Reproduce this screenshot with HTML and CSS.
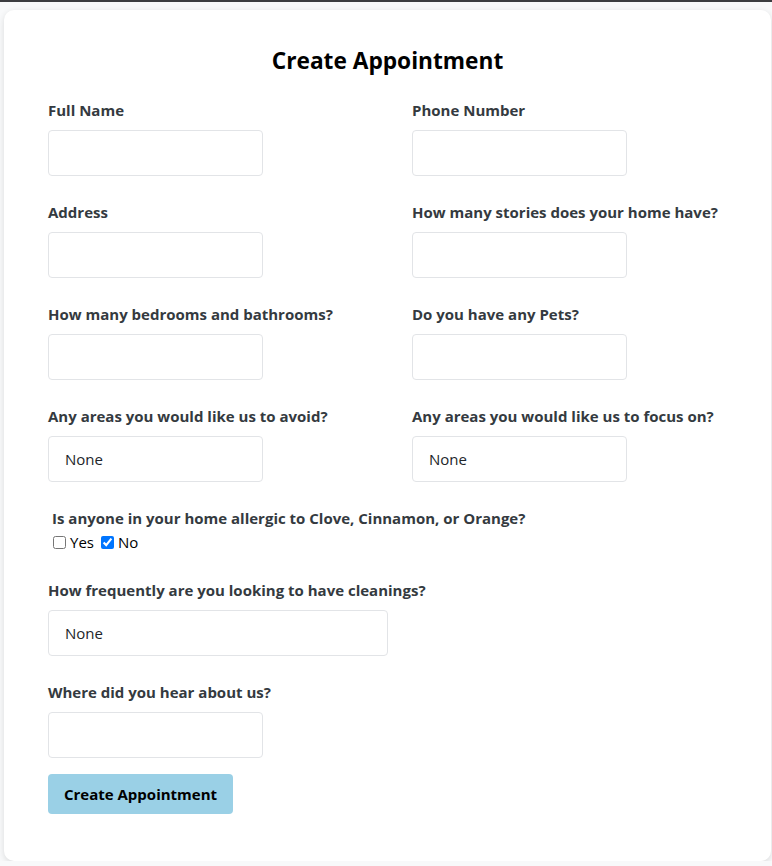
FILE: index.html
```html
<!DOCTYPE html>
<html>
<head>
<meta charset="utf-8">
<link rel="stylesheet" href="styles.css">
</head>
<body>
<div class="page">
  <div class="card">
    <h1 class="title">Create Appointment</h1>
    <form class="form">
      <div class="grid">
        <div class="field">
          <label class="label">Full Name</label>
          <input class="input" type="text">
        </div>
        <div class="field">
          <label class="label">Phone Number</label>
          <input class="input" type="text">
        </div>
        <div class="field">
          <label class="label">Address</label>
          <input class="input" type="text">
        </div>
        <div class="field">
          <label class="label">How many stories does your home have?</label>
          <input class="input" type="text">
        </div>
        <div class="field">
          <label class="label">How many bedrooms and bathrooms?</label>
          <input class="input" type="text">
        </div>
        <div class="field">
          <label class="label">Do you have any Pets?</label>
          <input class="input" type="text">
        </div>
        <div class="field">
          <label class="label">Any areas you would like us to avoid?</label>
          <input class="input" type="text" value="None">
        </div>
        <div class="field">
          <label class="label">Any areas you would like us to focus on?</label>
          <input class="input" type="text" value="None">
        </div>
      </div>
      <div class="allergy">
        <div class="label allergy-label">Is anyone in your home allergic to Clove, Cinnamon, or Orange?</div>
        <div class="checks">
          <label class="check"><input type="checkbox" class="box">Yes</label>
          <label class="check"><input type="checkbox" class="box" checked>No</label>
        </div>
      </div>
      <div class="field">
        <label class="label">How frequently are you looking to have cleanings?</label>
        <input class="input input-wide" type="text" value="None">
      </div>
      <div class="field">
        <label class="label">Where did you hear about us?</label>
        <input class="input" type="text">
      </div>
      <button type="button" class="btn">Create Appointment</button>
    </form>
  </div>
</div>
</body>
</html>
```
FILE: styles.css
```css
html, body {
  margin: 0;
  padding: 0;
}
body {
  background: #f8f9fa;
  border-top: 2px solid #3c3d40;
  font-family: "Open Sans", "Noto Sans", sans-serif;
  color: #343a40;
  overflow: hidden;
}
.page {
  padding: 8px 0 0 4px;
}
.card {
  background: #ffffff;
  width: 767px;
  height: 851px;
  box-sizing: border-box;
  border-radius: 10px;
  box-shadow: 0 2px 6px rgba(0, 0, 0, 0.12);
  padding: 38px 0 0 44px;
}
.title {
  margin: 0 0 24px -44px;
  text-align: center;
  font-size: 22.7px;
  line-height: 26px;
  font-weight: 700;
  color: #000;
}
.form {
  display: flex;
  flex-direction: column;
}
.grid {
  display: grid;
  grid-template-columns: 364px 1fr;
}
.field {
  display: flex;
  flex-direction: column;
  align-items: flex-start;
  padding-bottom: 24px;
}
.label {
  display: block;
  font-size: 15px;
  line-height: 24px;
  font-weight: 700;
  color: #343a40;
  margin-bottom: 8px;
  white-space: nowrap;
}
.input {
  width: 215px;
  height: 46px;
  box-sizing: border-box;
  border: 1px solid #e2e4e7;
  border-radius: 4px;
  padding: 0 16px;
  font-family: inherit;
  font-size: 15px;
  color: #212529;
  background: #fff;
  outline: none;
}
.input-wide {
  width: 340px;
}
.allergy {
  padding-left: 4px;
  padding-bottom: 24px;
}
.allergy-label {
  margin-bottom: 0;
}
.checks {
  display: flex;
  gap: 6px;
  font-size: 15px;
  line-height: 24px;
  color: #000;
}
.check {
  display: flex;
  align-items: center;
}
.box {
  margin: 0 4px 0 1px;
  width: 13px;
  height: 13px;
  accent-color: #0075ff;
}
.btn {
  align-self: flex-start;
  margin-top: -8px;
  width: 185px;
  height: 40px;
  border: none;
  border-radius: 4px;
  background: #9ad0e6;
  color: #000;
  font-family: inherit;
  font-size: 15px;
  font-weight: 700;
}
```
